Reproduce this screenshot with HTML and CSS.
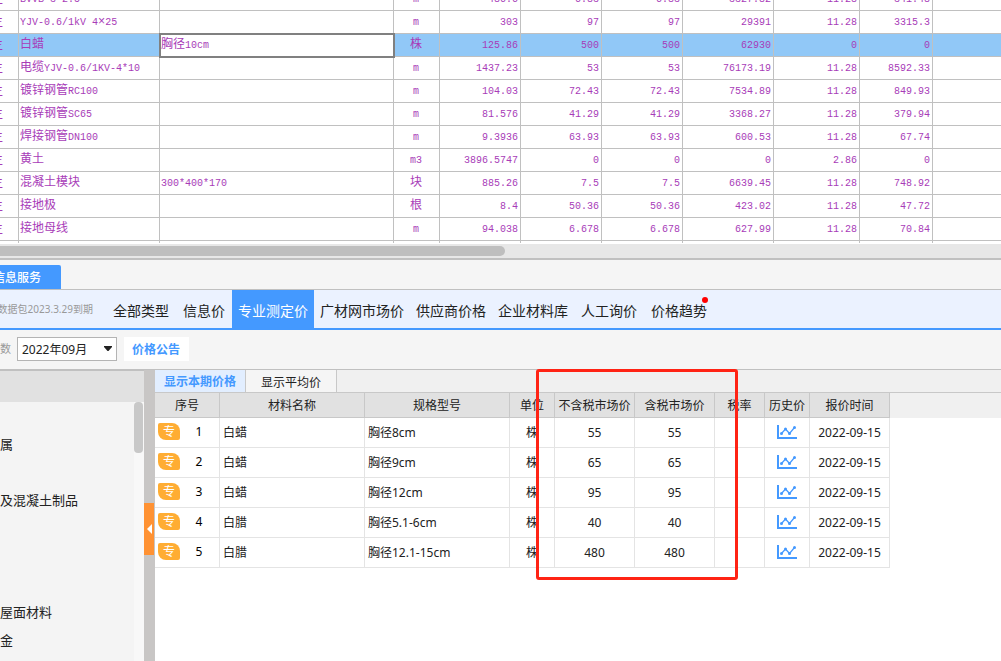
FILE: index.html
```html
<!DOCTYPE html>
<html lang="zh-CN">
<head>
<meta charset="utf-8">
<title>信息服务</title>
<link rel="stylesheet" href="styles.css">
</head>
<body>
<section class="materials">
<table class="grid">
<colgroup><col class="g-type"><col class="g-name"><col class="g-spec"><col class="g-unit"><col class="g-price"><col class="g-price"><col class="g-price"><col class="g-total"><col class="g-rate"><col class="g-tax"><col></colgroup>
<tbody>
<tr><td><div class="type">主</div></td><td>BVVB-3*2.5</td><td></td><td class="mid">m</td><td class="num">486.6</td><td class="num">6.83</td><td class="num">6.83</td><td class="num">3327.82</td><td class="num">11.28</td><td class="num">341.48</td><td></td></tr>
<tr><td><div class="type">主</div></td><td>YJV-0.6/1kV 4<span class="han">×</span>25</td><td></td><td class="mid">m</td><td class="num">303</td><td class="num">97</td><td class="num">97</td><td class="num">29391</td><td class="num">11.28</td><td class="num">3315.3</td><td></td></tr>
<tr class="selected"><td><div class="type">主</div></td><td><span class="han">白蜡</span></td><td class="editing"><span class="han">胸径</span>10cm</td><td class="mid"><span class="han">株</span></td><td class="num">125.86</td><td class="num">500</td><td class="num">500</td><td class="num">62930</td><td class="num">0</td><td class="num">0</td><td></td></tr>
<tr><td><div class="type">主</div></td><td><span class="han">电缆</span>YJV-0.6/1KV-4*10</td><td></td><td class="mid">m</td><td class="num">1437.23</td><td class="num">53</td><td class="num">53</td><td class="num">76173.19</td><td class="num">11.28</td><td class="num">8592.33</td><td></td></tr>
<tr><td><div class="type">主</div></td><td><span class="han">镀锌钢管</span>RC100</td><td></td><td class="mid">m</td><td class="num">104.03</td><td class="num">72.43</td><td class="num">72.43</td><td class="num">7534.89</td><td class="num">11.28</td><td class="num">849.93</td><td></td></tr>
<tr><td><div class="type">主</div></td><td><span class="han">镀锌钢管</span>SC65</td><td></td><td class="mid">m</td><td class="num">81.576</td><td class="num">41.29</td><td class="num">41.29</td><td class="num">3368.27</td><td class="num">11.28</td><td class="num">379.94</td><td></td></tr>
<tr><td><div class="type">主</div></td><td><span class="han">焊接钢管</span>DN100</td><td></td><td class="mid">m</td><td class="num">9.3936</td><td class="num">63.93</td><td class="num">63.93</td><td class="num">600.53</td><td class="num">11.28</td><td class="num">67.74</td><td></td></tr>
<tr><td><div class="type">主</div></td><td><span class="han">黄土</span></td><td></td><td class="mid">m3</td><td class="num">3896.5747</td><td class="num">0</td><td class="num">0</td><td class="num">0</td><td class="num">2.86</td><td class="num">0</td><td></td></tr>
<tr><td><div class="type">主</div></td><td><span class="han">混凝土模块</span></td><td>300*400*170</td><td class="mid"><span class="han">块</span></td><td class="num">885.26</td><td class="num">7.5</td><td class="num">7.5</td><td class="num">6639.45</td><td class="num">11.28</td><td class="num">748.92</td><td></td></tr>
<tr><td><div class="type">主</div></td><td><span class="han">接地极</span></td><td></td><td class="mid"><span class="han">根</span></td><td class="num">8.4</td><td class="num">50.36</td><td class="num">50.36</td><td class="num">423.02</td><td class="num">11.28</td><td class="num">47.72</td><td></td></tr>
<tr><td><div class="type">主</div></td><td><span class="han">接地母线</span></td><td></td><td class="mid">m</td><td class="num">94.038</td><td class="num">6.678</td><td class="num">6.678</td><td class="num">627.99</td><td class="num">11.28</td><td class="num">70.84</td><td></td></tr>
<tr class="stub"><td></td><td></td><td></td><td></td><td></td><td></td><td></td><td></td><td></td><td></td><td></td></tr>
</tbody>
</table>
</section>
<div class="hscroll"><div class="hthumb"></div></div>

<div class="service-tabs"><button class="service-tab" type="button">信息服务</button></div>

<nav class="nav">
<span class="expiry">数据包2023.3.29到期</span>
<a class="nav-link wide" href="#">全部类型</a>
<a class="nav-link wide" href="#">信息价</a>
<a class="nav-link active" href="#">专业测定价</a>
<a class="nav-link" href="#">广材网市场价</a>
<a class="nav-link" href="#">供应商价格</a>
<a class="nav-link" href="#">企业材料库</a>
<a class="nav-link wide" href="#">人工询价</a>
<a class="nav-link wide" href="#">价格趋势<i class="dot"></i></a>
</nav>

<div class="toolbar">
<label class="period-label" for="period">数</label>
<div class="period">
<select id="period"><option>2022年09月</option></select>
<svg class="caret" viewBox="0 0 8 6" aria-hidden="true"><path d="M0 0h8v1L4.500 5h-1L0 1z" fill="#222"/></svg>
</div>
<button class="notice" type="button">价格公告</button>
</div>

<main class="main">
<aside class="side">
<div class="side-head"></div>
<div class="side-body">
<ul class="tree">
<li></li><li>属</li><li></li><li>及混凝土制品</li><li></li><li></li><li></li><li>屋面材料</li><li>金</li>
</ul>
<div class="vscroll"><div class="vthumb"></div></div>
</div>
</aside>
<div class="splitter">
<button class="collapse" type="button" aria-label="收起"><svg viewBox="0 0 5 10" aria-hidden="true"><path d="M5 0v10L0 5z" fill="#fff"/></svg></button>
</div>
<section class="prices">
<div class="price-tabs"><button class="price-tab current" type="button">显示本期价格</button><button class="price-tab" type="button">显示平均价</button></div>
<div class="table-wrap">
<table class="list">
<colgroup><col class="l-no"><col class="l-text"><col class="l-text"><col class="l-unit"><col class="l-price"><col class="l-price"><col class="l-rate"><col class="l-unit"><col class="l-price"></colgroup>
<thead><tr><th>序号</th><th>材料名称</th><th>规格型号</th><th>单位</th><th>不含税市场价</th><th>含税市场价</th><th>税率</th><th>历史价</th><th>报价时间</th></tr></thead>
<tbody>
<tr><td><div class="no"><span class="badge">专</span><span class="index">1</span></div></td><td class="left">白蜡</td><td class="left">胸径8cm</td><td>株</td><td>55</td><td>55</td><td></td><td><svg class="chart" viewBox="0 0 20 15"><use href="#trend"/></svg></td><td>2022-09-15</td></tr>
<tr><td><div class="no"><span class="badge">专</span><span class="index">2</span></div></td><td class="left">白蜡</td><td class="left">胸径9cm</td><td>株</td><td>65</td><td>65</td><td></td><td><svg class="chart" viewBox="0 0 20 15"><use href="#trend"/></svg></td><td>2022-09-15</td></tr>
<tr><td><div class="no"><span class="badge">专</span><span class="index">3</span></div></td><td class="left">白蜡</td><td class="left">胸径12cm</td><td>株</td><td>95</td><td>95</td><td></td><td><svg class="chart" viewBox="0 0 20 15"><use href="#trend"/></svg></td><td>2022-09-15</td></tr>
<tr><td><div class="no"><span class="badge">专</span><span class="index">4</span></div></td><td class="left">白腊</td><td class="left">胸径5.1-6cm</td><td>株</td><td>40</td><td>40</td><td></td><td><svg class="chart" viewBox="0 0 20 15"><use href="#trend"/></svg></td><td>2022-09-15</td></tr>
<tr><td><div class="no"><span class="badge">专</span><span class="index">5</span></div></td><td class="left">白腊</td><td class="left">胸径12.1-15cm</td><td>株</td><td>480</td><td>480</td><td></td><td><svg class="chart" viewBox="0 0 20 15"><use href="#trend"/></svg></td><td>2022-09-15</td></tr>
</tbody>
</table>
</div>
<div class="highlight"></div>
</section>
</main>
<svg class="defs" aria-hidden="true"><defs><g id="trend"><path d="M1 0V13H20" fill="none" stroke="#4499ff" stroke-width="2"/><path d="M4.500 8.500L8.500 4L12.500 8.500L17.500 2.500" fill="none" stroke="#4499ff" stroke-width="1.200"/><g fill="#4499ff"><circle cx="4.500" cy="8.500" r="1.500"/><circle cx="8.500" cy="4" r="1.500"/><circle cx="12.500" cy="8.500" r="1.500"/><circle cx="17.500" cy="2.500" r="1.500"/></g></g></defs></svg>
</body>
</html>
```
FILE: styles.css
```css
* { box-sizing: border-box; }
body {
  margin: 0;
  min-height: 100vh;
  display: flex;
  flex-direction: column;
  background: #f5f5f5;
  color: #222;
  font: 12px/16px "Noto Sans", "Noto Sans CJK SC", sans-serif;
  overflow: hidden;
}
button, select { font: inherit; border: 0; margin: 0; padding: 0; border-radius: 0; }
table { border-collapse: separate; border-spacing: 0; table-layout: fixed; }

/* upper material grid, scrolled to its last rows */
.materials {
  flex: none;
  height: 244px;
  display: flex;
  flex-direction: column;
  justify-content: flex-end;
  overflow: hidden;
  background: #fff;
  padding-bottom: 1px;
}
.grid { width: 100%; color: #a83cb8; font: 10px/16px "Liberation Mono", "Noto Sans CJK SC", monospace; }
.grid td {
  height: 23px;
  padding: 1px 2px 0 1px;
  border-right: 1px solid #c0c0c0;
  border-bottom: 1px solid #c0c0c0;
  white-space: nowrap;
}
.grid td:first-child { padding: 1px 0 0; }
.grid td:last-child { border-right: 0; }
.grid td.num { text-align: right; }
.grid td.mid { text-align: center; }
.grid .stub td { height: 2px; border-bottom: 0; }
.han { font-size: 12px; }
.type { display: flex; justify-content: flex-end; padding-right: 15px; font-size: 12px; }
.selected { background: #91c8f7; }
.grid td.editing { background: #fff; outline: 2px solid #808080; outline-offset: -1px; }
.g-type { width: 19px; }
.g-name { width: 141px; }
.g-spec { width: 234px; }
.g-unit { width: 46px; }
.g-price { width: 81px; }
.g-total { width: 91px; }
.g-rate { width: 86px; }
.g-tax { width: 73px; }

.hscroll { flex: none; padding: 2px 0; background: #e7e7e7; border-bottom: 2px solid #c0c0c0; }
.hthumb { width: 50.4%; height: 10px; background: #bebebe; border-radius: 0 5px 5px 0; }

.service-tabs { flex: none; display: flex; padding-top: 5px; border-bottom: 1px solid #c0c0c0; }
.service-tab {
  width: 61px;
  height: 24px;
  padding: 2px 20px 0 0;
  display: flex;
  align-items: center;
  justify-content: flex-end;
  white-space: nowrap;
  background: #4499ff;
  border-radius: 0 2px 0 0;
  color: #fff;
  font-weight: 500;
}

.nav { flex: none; height: 40px; display: flex; background: #ebf2ff; border-bottom: 2px solid #4499ff; white-space: nowrap; }
.expiry {
  width: 106px;
  padding-right: 13px;
  display: flex;
  align-items: center;
  justify-content: flex-end;
  color: #999;
  font-size: 10px;
}
.nav-link {
  position: relative;
  display: flex;
  align-items: center;
  padding: 3px 6px 0;
  color: #222;
  font-size: 14px;
  text-decoration: none;
}
.nav-link.wide { padding: 3px 7px 0; }
.nav-link.active { background: #4499ff; color: #fff; }
.dot { position: absolute; top: 7px; right: 6px; width: 6px; height: 6px; border-radius: 50%; background: #f00; }

.toolbar { flex: none; display: flex; align-items: center; padding: 7px 0 8px; border-bottom: 1px solid #c0c0c0; }
.period-label { width: 17px; color: #999; font-size: 11px; }
.period { position: relative; width: 100px; }
.period select {
  display: block;
  width: 100%;
  height: 24px;
  padding: 1px 0 0 4px;
  appearance: none;
  background: #fff;
  border: 1px solid #b4b4b4;
  color: #222;
}
.caret { position: absolute; top: 9px; right: 5px; width: 8px; height: 6px; pointer-events: none; }
.notice { margin-left: 7px; padding: 5px 9px 3px 8px; background: #fff; color: #4499ff; font-weight: 700; }

.main { flex: 1; display: flex; }
.side { width: 144px; display: flex; flex-direction: column; }
.side-head { height: 32px; background: #e1e1e1; border-top: 1px solid #c0c0c0; }
.side-body { flex: 1; display: flex; background: #f4f4f4; }
.tree { flex: 1; margin: 0; padding: 0; list-style: none; font-size: 13px; line-height: 28px; }
.tree li { height: 28px; white-space: nowrap; }
.vscroll { width: 10px; padding-right: 1px; background: #f8f8f8; }
.vthumb { height: 51px; background: #c8c8c8; border-radius: 4px; }

.splitter { width: 11px; display: flex; align-items: flex-start; padding-top: 133px; background: #c8c6c5; }
.collapse { width: 10px; height: 52px; display: flex; align-items: center; justify-content: center; background: #ff9233; }
.collapse svg { width: 5px; height: 10px; }

.prices { position: relative; flex: 1; min-width: 0; background: #fff; }
.price-tabs { display: flex; height: 23px; background: #f0f0f0; border-bottom: 1px solid #c8c8c8; }
.price-tab { width: 91px; background: #f5f5f5; border-right: 1px solid #c8c8c8; color: #222; padding-top: 3px; }
.price-tab.current { background: #e2eeff; color: #4499ff; font-weight: 700; padding-top: 1px; }
.table-wrap { background: linear-gradient(#f0f0f0 25px, #fff 25px); }
.list { width: 735px; }
.list th { height: 25px; padding: 2px 0 0; background: #e1e1e1; border-right: 1px solid #c8c8c8; border-bottom: 1px solid #c8c8c8; font-weight: 400; white-space: nowrap; }
.list td { height: 30px; padding: 0; border-right: 1px solid #e4e4e4; border-bottom: 1px solid #e4e4e4; text-align: center; white-space: nowrap; }
.list td.left { padding-left: 3px; text-align: left; }
.l-no { width: 65px; }
.l-text { width: 145px; }
.l-unit { width: 45px; }
.l-price { width: 80px; }
.l-rate { width: 50px; }
.no { display: flex; align-items: center; padding: 0 0 2px 3px; color: #000; }
.badge { width: 22px; height: 17px; line-height: 17px; border-radius: 2px 8px 2px 8px; background: #ffad33; color: #fff; text-align: center; }
.index { width: 38px; text-align: center; }
.chart { display: block; width: 20px; height: 15px; margin: 0 auto; }
.highlight { position: absolute; left: 381px; top: -1px; width: 202px; height: 211px; border: 3px solid #ff2314; border-radius: 3px; }
.defs { position: absolute; width: 0; height: 0; }
```
